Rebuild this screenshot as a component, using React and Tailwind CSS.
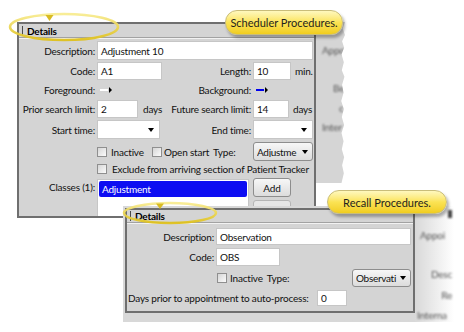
import React from 'react';

const Field = ({ value = '', className = '' }) => (
  <div className={`bg-white border border-[#c6c6c6] px-[3px] flex items-center whitespace-nowrap ${className}`}>{value}</div>
);

const Arrow = ({ className = '' }) => (
  <span className={`w-0 h-0 border-l-[3px] border-r-[3px] border-t-[4px] border-l-transparent border-r-transparent border-t-black shrink-0 ${className}`} />
);

const Dropdown = ({ value = '', className = '' }) => (
  <div className={`bg-white border border-[#c6c6c6] pl-[3px] pr-[5px] flex items-center justify-between ${className}`}>
    <span>{value}</span>
    <Arrow />
  </div>
);

const ComboButton = ({ value, className = '' }) => (
  <div className={`rounded-[3px] border border-[#8d8d8d] bg-linear-to-b from-[#f7f7f7] to-[#dcdcdc] pl-[3px] pr-[4px] flex items-center ${className}`}>
    <span className="flex-1 overflow-hidden whitespace-nowrap tracking-[-0.3px]">{value}</span>
    <Arrow className="ml-[2px]" />
  </div>
);

const Check = ({ className = '' }) => (
  <span className={`w-[10px] h-[10px] border border-[#8f8f8f] bg-linear-to-br from-[#d6d6d6] to-[#fbfbfb] shrink-0 ${className}`} />
);

const Swatch = ({ color }) => (
  <span className="flex items-center">
    <span className={`w-[8px] h-[2px] ${color}`} />
    <span className="ml-[1px] w-0 h-0 border-t-[3px] border-b-[3px] border-l-[3px] border-t-transparent border-b-transparent border-l-black" />
  </span>
);

const Header = ({ className = '' }) => (
  <div className={`flex items-center border-b border-[#a2a2a2] shadow-[0_1px_0_#f2f2f2] ${className}`}>
    <span className="ml-[3px] w-px h-[10px] bg-[#4a4a4a]" />
    <span className="ml-[4px] font-bold text-black">Details</span>
  </div>
);

const Row = ({ label, className = '', labelClass = 'w-[76px]', children }) => (
  <div className={`flex items-center ${className}`}>
    <span className={`${labelClass} text-right whitespace-nowrap shrink-0`}>{label}</span>
    <div className="ml-[2px] flex items-center flex-1">{children}</div>
  </div>
);

function SchedulerGroup() {
  return (
    <div className="w-[299px] h-[196px] border-2 border-[#6f6f6f] bg-[#d4d4d4] overflow-hidden shrink-0">
      <Header className="h-[14px]" />
      <div className="pt-[3px]">
        <Row label="Description:" className="h-[19px]">
          <Field value="Adjustment 10" className="w-[216px] h-[19px]" />
        </Row>
        <Row label="Code:" className="h-[18px] mt-[2px]">
          <div className="w-[154px] flex items-center">
            <Field value="A1" className="w-[65px] h-[18px]" />
            <span className="ml-auto">Length:</span>
          </div>
          <div className="ml-[2px] flex items-center">
            <Field value="10" className="w-[38px] h-[18px]" />
            <span className="ml-[4px]">min.</span>
          </div>
        </Row>
        <Row label="Foreground:" className="h-[18px] mt-[1px]">
          <div className="w-[154px] flex items-center">
            <span className="ml-[3px]"><Swatch color="bg-white" /></span>
            <span className="ml-auto">Background:</span>
          </div>
          <div className="ml-[5px] flex items-center">
            <Swatch color="bg-[#0000ee]" />
          </div>
        </Row>
        <Row label="Prior search limit:" className="h-[18px] mt-[1px]">
          <div className="w-[154px] flex items-center">
            <Field value="2" className="w-[41px] h-[18px]" />
            <span className="ml-[5px]">days</span>
            <span className="ml-auto whitespace-nowrap">Future search limit:</span>
          </div>
          <div className="ml-[2px] flex items-center">
            <Field value="14" className="w-[36px] h-[18px]" />
            <span className="ml-[4px]">days</span>
          </div>
        </Row>
        <Row label="Start time:" className="h-[19px] mt-[2px]">
          <div className="w-[154px] flex items-center">
            <Dropdown className="w-[63px] h-[19px]" />
            <span className="ml-auto">End time:</span>
          </div>
          <div className="ml-[2px] flex items-center">
            <Dropdown className="w-[60px] h-[19px]" />
          </div>
        </Row>
        <Row label="" className="h-[19px] mt-[3px]">
          <div className="w-[154px] flex items-center">
            <Check />
            <span className="ml-[4px] w-[41px]">Inactive</span>
            <Check />
            <span className="ml-[2px] w-[49px] whitespace-nowrap">Open start</span>
            <span>Type:</span>
          </div>
          <div className="ml-[2px] flex items-center">
            <ComboButton value="Adjustme" className="w-[60px] h-[19px]" />
          </div>
        </Row>
        <Row label="" className="h-[16px]">
          <Check />
          <span className="ml-[5px] whitespace-nowrap">Exclude from arriving section of Patient Tracker</span>
        </Row>
        <div className="flex items-start mt-[1px]">
          <span className="w-[76px] text-right shrink-0 pt-[4px]">Classes (1):</span>
          <div className="ml-[2px] mt-[1px] w-[152px] h-[40px] bg-white border border-[#c6c6c6] p-[1px]">
            <div className="h-[16px] rounded-[2px] bg-[#0d0df2] text-white pl-[3px] flex items-center">Adjustment</div>
          </div>
          <div className="ml-[4px] flex flex-col">
            <div className="w-[38px] h-[19px] rounded-[3px] border border-[#8d8d8d] bg-linear-to-b from-[#f7f7f7] to-[#dcdcdc] flex items-center justify-center">Add</div>
            <div className="mt-[3px] w-[38px] h-[19px] rounded-[3px] border border-[#b5b5b5] bg-[#e6e6e6] text-[#9a9a9a] flex items-center justify-center">Remove</div>
          </div>
        </div>
      </div>
    </div>
  );
}

const torn = '[clip-path:polygon(0_0,100%_0,92%_4%,100%_8%,90%_12%,97%_16%,88%_20%,96%_25%,89%_30%,98%_34%,90%_39%,95%_44%,87%_49%,96%_54%,89%_59%,97%_64%,88%_69%,95%_74%,89%_79%,97%_84%,90%_89%,96%_94%,88%_100%,0_100%)]';

function TornStrip() {
  return (
    <div className={`w-[29px] h-[161px] bg-[#d5d5d5] ${torn}`}>
      <div className="flex flex-col pt-[23px] pl-[6px] text-[#555] blur-[1px] leading-[10px] whitespace-nowrap">
        <span>Appo</span>
        <span className="mt-[28px] ml-[11px]">Be</span>
        <span className="mt-[10px] ml-[17px]">c</span>
        <span className="mt-[9px]">Inter</span>
      </div>
    </div>
  );
}

function RecallWindow() {
  return (
    <div className="absolute left-[123px] top-[206px] w-[331px] h-[116px] bg-linear-to-r from-[#d8d8d8] from-88% to-white pt-[2px] pl-[2px] flex items-start">
      <div className="w-[290px] h-[105px] border-2 border-[#6f6f6f] bg-[#d4d4d4] overflow-hidden shrink-0">
        <Header className="h-[13px]" />
        <div className="pt-[5px]">
          <Row label="Description:" labelClass="w-[87px]" className="h-[17px]">
            <Field value="Observation" className="w-[195px] h-[17px]" />
          </Row>
          <Row label="Code:" labelClass="w-[87px]" className="h-[18px] mt-[3px]">
            <Field value="OBS" className="w-[64px] h-[18px]" />
          </Row>
          <Row label="" labelClass="w-[87px]" className="h-[19px] mt-[2px]">
            <Check className="ml-[1px]" />
            <span className="ml-[3px]">Inactive</span>
            <span className="ml-[4px]">Type:</span>
            <ComboButton value="Observati" className="ml-auto mr-[2px] w-[59px] h-[18px]" />
          </Row>
          <div className="flex items-center h-[16px] mt-[3px] pl-[1px]">
            <span className="w-[189px] whitespace-nowrap">Days prior to appointment to auto-process:</span>
            <Field value="0" className="w-[30px] h-[16px]" />
          </div>
        </div>
      </div>
      <div className="flex-1 flex flex-col items-end pr-[2px] text-[#555] blur-[1px] leading-[10px] whitespace-nowrap overflow-hidden">
        <span className="mt-[2px] w-[4px] h-[8px] bg-[#444]" />
        <span className="mt-[12px] self-start ml-[5px]">Appoi</span>
        <span className="mt-[29px]">Desc</span>
        <span className="mt-[11px]">Re</span>
        <span className="mt-[10px] self-start ml-[2px]">Interna</span>
      </div>
    </div>
  );
}

function Highlights() {
  return (
    <svg className="absolute inset-0 pointer-events-none" width="464" height="332" viewBox="0 0 464 332">
      <defs>
        <linearGradient id="ring" x1="0" y1="0" x2="0" y2="1">
          <stop offset="0" stopColor="#f8ec92" />
          <stop offset="1" stopColor="#dfc11c" />
        </linearGradient>
      </defs>
      <ellipse cx="64" cy="27" rx="54" ry="13" fill="none" stroke="url(#ring)" strokeWidth="2.5" opacity="0.95" />
      <polygon points="45.5,15 53.5,15 49.5,21" fill="#d8bb22" />
      <ellipse cx="170" cy="213" rx="46" ry="10" fill="none" stroke="url(#ring)" strokeWidth="2.5" opacity="0.95" />
      <polygon points="156,203.5 164,203.5 160,209" fill="#d8bb22" />
    </svg>
  );
}

const Callout = ({ children, className = '' }) => (
  <div className={`absolute rounded-[12px] border border-[#c9bd7a] bg-linear-to-b from-[#fff8bd] via-[#fbe353] to-[#f1cd1c] shadow-[2px_3px_3px_rgba(0,0,0,0.3)] flex items-center justify-center text-[11px] text-[#1e1e1e] whitespace-nowrap ${className}`}>
    {children}
  </div>
);

export default function App() {
  return (
    <div className="relative w-[464px] h-[332px] overflow-hidden bg-white font-[Lato,sans-serif] text-[10px] tracking-[-0.2px] text-[#111] leading-none">
      <div className="pt-[22px] pl-[17px] flex items-start">
        <SchedulerGroup />
        <TornStrip />
      </div>
      <RecallWindow />
      <Highlights />
      <Callout className="left-[225px] top-[10px] w-[118px] h-[25px] tracking-normal">Scheduler Procedures.</Callout>
      <Callout className="left-[327px] top-[190px] w-[120px] h-[24px] tracking-normal">Recall Procedures.</Callout>
    </div>
  );
}
